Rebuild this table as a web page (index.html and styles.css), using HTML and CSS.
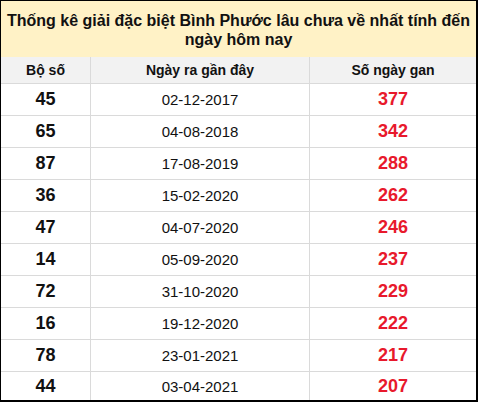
FILE: index.html
```html
<!DOCTYPE html>
<html lang="vi">
<head>
<meta charset="utf-8">
<link rel="stylesheet" href="styles.css">
</head>
<body>
<div class="board">
  <div class="title">Thống kê giải đặc biệt Bình Phước lâu chưa về nhất tính đến ngày hôm nay</div>
  <div class="grid">
    <div class="cell head">Bộ số</div><div class="cell head">Ngày ra gần đây</div><div class="cell head">Số ngày gan</div>
    <div class="cell num">45</div><div class="cell date">02-12-2017</div><div class="cell gan">377</div>
    <div class="cell num">65</div><div class="cell date">04-08-2018</div><div class="cell gan">342</div>
    <div class="cell num">87</div><div class="cell date">17-08-2019</div><div class="cell gan">288</div>
    <div class="cell num">36</div><div class="cell date">15-02-2020</div><div class="cell gan">262</div>
    <div class="cell num">47</div><div class="cell date">04-07-2020</div><div class="cell gan">246</div>
    <div class="cell num">14</div><div class="cell date">05-09-2020</div><div class="cell gan">237</div>
    <div class="cell num">72</div><div class="cell date">31-10-2020</div><div class="cell gan">229</div>
    <div class="cell num">16</div><div class="cell date">19-12-2020</div><div class="cell gan">222</div>
    <div class="cell num">78</div><div class="cell date">23-01-2021</div><div class="cell gan">217</div>
    <div class="cell num last">44</div><div class="cell date last">03-04-2021</div><div class="cell gan last">207</div>
  </div>
</div>
</body>
</html>
```
FILE: styles.css
```css
html, body {
  margin: 0;
  padding: 0;
  background: #fff;
}
.board {
  box-sizing: border-box;
  width: 478px;
  height: 402px;
  border-top: 1px solid #000;
  border-left: 1px solid #000;
  border-right: 2px solid #000;
  border-bottom: 2px solid #000;
  font-family: "Liberation Sans", Arial, sans-serif;
  overflow: hidden;
}
.title {
  box-sizing: border-box;
  height: 56px;
  background: #fff2c6;
  color: #111;
  font-weight: bold;
  font-size: 16px;
  line-height: 19px;
  text-align: center;
  padding: 10px 4px 0;
}
.grid {
  display: grid;
  grid-template-columns: 90px 219px 1fr;
  grid-template-rows: 27px repeat(9, 32px) 28px;
}
.cell {
  display: flex;
  align-items: center;
  justify-content: center;
  border-bottom: 1px solid #dadada;
  border-right: 1px solid #dadada;
  color: #111;
}
.cell:nth-child(3n) {
  border-right: none;
}
.head {
  background: #f2f2f2;
  font-weight: bold;
  font-size: 14px;
  border-top: none;
}
.num {
  font-weight: bold;
  font-size: 18px;
}
.date {
  font-size: 15px;
}
.gan {
  font-weight: bold;
  font-size: 18px;
  color: #e8192c;
}
.last {
  border-bottom: none;
}
```
